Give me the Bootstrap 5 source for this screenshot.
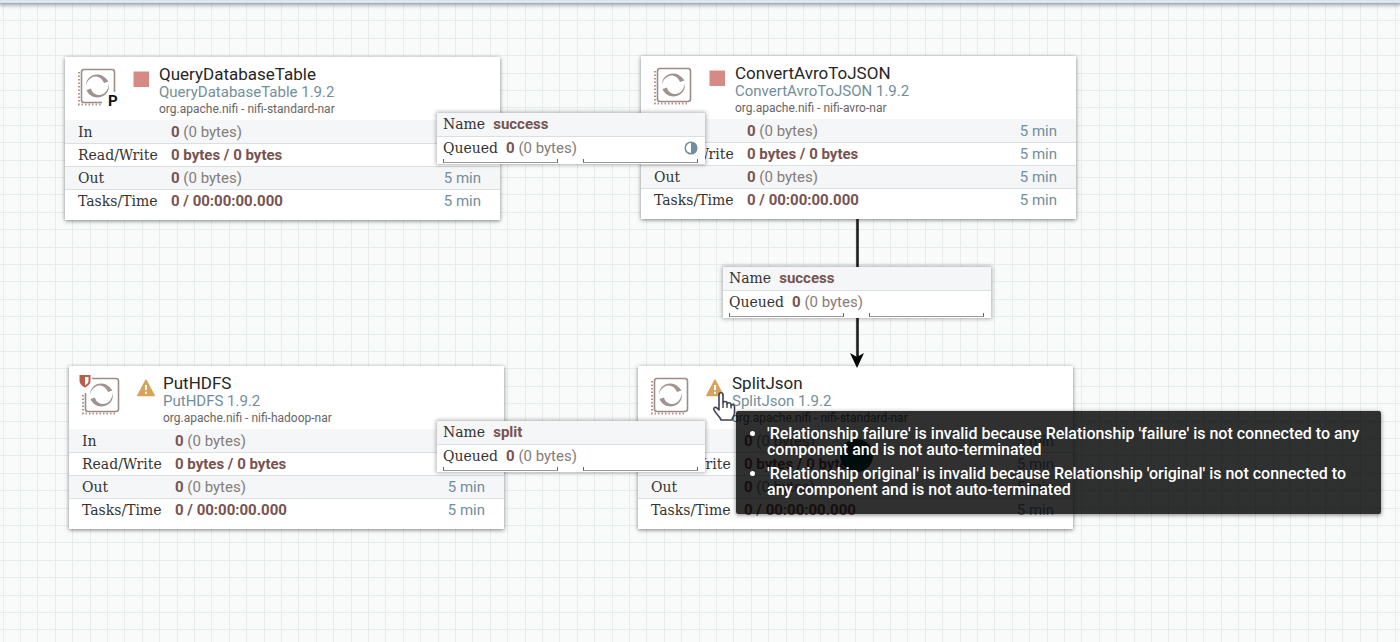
<!DOCTYPE html>
<html lang="en">
<head>
<meta charset="utf-8">
<meta name="viewport" content="width=device-width, initial-scale=1">
<title>NiFi Flow</title>
<link href="https://cdn.jsdelivr.net/npm/bootstrap@5.3.0/dist/css/bootstrap.min.css" rel="stylesheet">
<style>
  body { font-family: Roboto, "Liberation Sans", sans-serif; color: #775351; }
  .flow-canvas {
    --grid: #e5edef;
    background-color: #f9fbfb;
    background-image:
      repeating-linear-gradient(90deg, transparent 0 3px, var(--grid) 3px 4px, transparent 4px 20px, var(--grid) 20px 21px, transparent 21px 37px, var(--grid) 37px 38px, transparent 38px 55px, var(--grid) 55px 56px, transparent 56px 72px, var(--grid) 72px 73px, transparent 73px 87px),
      repeating-linear-gradient(180deg, transparent 0 3px, var(--grid) 3px 4px, transparent 4px 20px, var(--grid) 20px 21px, transparent 21px 38px, var(--grid) 38px 39px, transparent 39px 55px, var(--grid) 55px 56px, transparent 56px 73px, var(--grid) 73px 74px, transparent 74px 87px);
  }
  .top-edge { height: 3px; background: #dce6ef; box-shadow: 0 1px 4px 1px rgba(60,70,90,.55); }
  .processor { width: 435px; background: #fff; box-shadow: 0 1px 4px rgba(0,0,0,.5); padding-bottom: 7px; }
  .processor header { height: 63px; padding: 8px 13px 0; }
  .proc-icon { width: 38px; height: 40px; margin-top: 3px; overflow: visible; }
  .run-icon { width: 18px; height: 18px; margin: 5px 8px 0 17px; }
  .proc-name { font-size: 17px; line-height: 18px; color: #262626; font-weight: 400; }
  .proc-type { font-size: 15px; line-height: 18px; color: #728e9b; }
  .proc-bundle { font-size: 12px; line-height: 16px; color: #666; }
  .stat-rows { font-size: 15px; line-height: 22px; }
  .stat-rows tr { height: 23px; border-top: 1px solid #dcdfe2; }
  .stat-rows tr:first-child { border-top-color: #f4f6f7; }
  .stat-rows tr:nth-child(odd) { background: #f4f6f7; }
  .stat-rows th, .stat-rows td { padding: 0; }
  .stat-rows th { width: 106px; padding-left: 13px; }
  .stat-rows td:last-child { padding-right: 19px; text-align: right; color: #728e9b; }
  .slab { font-family: "Roboto Slab", "DejaVu Serif", serif; font-size: 14px; font-weight: 400; color: #333; }
  .amount { color: #867c79; }
  .connection { width: 268px; height: 51px; background: #fff; box-shadow: 0 0 4px 1px rgba(0,0,0,.3); font-size: 15px; line-height: 23px; z-index: 2; }
  .connection .line-name { background: #f4f6f7; border-bottom: 1px solid #dcdfe2; }
  .connection .line-name, .connection .line-queue { height: 24px; padding: 0 7px 0 6px; }
  .pressure { padding: 0 7px 0 6px; gap: 25px; margin-top: -2px; }
  .pressure i { height: 4px; border: 2px solid #666; border-width: 0 1px 1px; border-bottom-color: #999; }
  .line-arrow { z-index: 1; }
  .invalid-tip { width: 645px; padding: 15px 10px 8px 0; border-radius: 2px; background: rgba(0,0,0,.81); box-shadow: 0 1px 4px rgba(0,0,0,.5); color: #fff; font-size: 16px; font-weight: 500; line-height: 16px; z-index: 4; }
  .invalid-tip ul { padding-left: 31px; }
  .invalid-tip li { margin-bottom: 8px; }
  .link-handle { left: 202px; top: 73px; width: 33px; height: 33px; background: #004849; }
  .pointer-hand { z-index: 5; }
</style>
</head>
<body>
<svg class="d-none" aria-hidden="true">
  <symbol id="proc-box" viewBox="0 0 38 40">
    <rect x="3.5" y="1.5" width="33" height="33" rx="2.5" fill="#fff" stroke="#9c8d8a" stroke-width="1.6"/>
    <path d="M1 4V36.500H34" fill="none" stroke="#b98f88" stroke-width="2" stroke-dasharray="1.500 2"/>
  </symbol>
  <symbol id="proc-arcs" viewBox="0 0 38 40">
    <g fill="#a0938f">
      <path d="M8 18C8 10 14 6 20 6.500C25 7 28 10 30.500 13.500L26 15C24 10 20 8 16.500 8.500C12 9.500 9 13 8 18Z"/>
      <path d="M31 16C31.500 24 27 29 20 29.500C14 29.500 10 26 8.500 22L13 20.500C14 25 18 27.500 22 27C27 26 30 22 31 16Z"/>
    </g>
  </symbol>
  <symbol id="warn" viewBox="0 0 18 18">
    <path d="M9 1.200 17.200 16.500H.8Z" fill="#d9a25b" stroke="#d9a25b" stroke-width="1.500" stroke-linejoin="round"/>
    <path d="M9 6v5M9 12.800v2" stroke="#fff" stroke-width="2"/>
  </symbol>
  <symbol id="stopped" viewBox="0 0 18 18"><path d="M.500 1.500h15.500v15.500h-15.500z" fill="#d68a85"/></symbol>
</svg>

<main class="flow-canvas position-relative min-vh-100 overflow-hidden">
  <div class="top-edge"></div>

  <section class="processor position-absolute" style="left:65px;top:57px">
    <header class="d-flex align-items-start">
      <svg class="proc-icon flex-shrink-0" viewBox="0 0 38 40"><use href="#proc-box"/><use href="#proc-arcs"/><path d="M31 24h8v15H24V32Z" fill="#fff"/><text x="30" y="38" font-size="15" font-weight="700" fill="#111">P</text></svg>
      <svg class="run-icon flex-shrink-0"><use href="#stopped"/></svg>
      <div><h2 class="proc-name m-0">QueryDatabaseTable</h2><div class="proc-type">QueryDatabaseTable 1.9.2</div><div class="proc-bundle">org.apache.nifi - nifi-standard-nar</div></div>
    </header>
    <table class="stat-rows w-100">
      <tr><th class="slab">In</th><td><b>0</b> <span class="amount">(0 bytes)</span></td><td>5 min</td></tr>
      <tr><th class="slab">Read/Write</th><td><b>0 bytes / 0 bytes</b></td><td>5 min</td></tr>
      <tr><th class="slab">Out</th><td><b>0</b> <span class="amount">(0 bytes)</span></td><td>5 min</td></tr>
      <tr><th class="slab">Tasks/Time</th><td><b>0 / 00:00:00.000</b></td><td>5 min</td></tr>
    </table>
  </section>

  <section class="processor position-absolute" style="left:641px;top:56px">
    <header class="d-flex align-items-start">
      <svg class="proc-icon flex-shrink-0"><use href="#proc-box"/><use href="#proc-arcs"/></svg>
      <svg class="run-icon flex-shrink-0"><use href="#stopped"/></svg>
      <div><h2 class="proc-name m-0">ConvertAvroToJSON</h2><div class="proc-type">ConvertAvroToJSON 1.9.2</div><div class="proc-bundle">org.apache.nifi - nifi-avro-nar</div></div>
    </header>
    <table class="stat-rows w-100">
      <tr><th class="slab">In</th><td><b>0</b> <span class="amount">(0 bytes)</span></td><td>5 min</td></tr>
      <tr><th class="slab">Read/Write</th><td><b>0 bytes / 0 bytes</b></td><td>5 min</td></tr>
      <tr><th class="slab">Out</th><td><b>0</b> <span class="amount">(0 bytes)</span></td><td>5 min</td></tr>
      <tr><th class="slab">Tasks/Time</th><td><b>0 / 00:00:00.000</b></td><td>5 min</td></tr>
    </table>
  </section>

  <section class="processor position-absolute" style="left:69px;top:366px">
    <header class="d-flex align-items-start">
      <svg class="proc-icon flex-shrink-0" viewBox="0 0 38 40"><use href="#proc-box"/><use href="#proc-arcs"/><path d="M0 0h10v11l-4 5H0z" fill="#fff"/></svg>
      <svg class="run-icon flex-shrink-0"><use href="#warn"/></svg>
      <div><h2 class="proc-name m-0">PutHDFS</h2><div class="proc-type">PutHDFS 1.9.2</div><div class="proc-bundle">org.apache.nifi - nifi-hadoop-nar</div></div>
      <svg class="position-absolute" style="left:10px;top:8px" width="12" height="14" viewBox="0 0 12 14"><path d="M.500 1h11v6c0 3-2.500 5-5.500 6.500C3 12 .500 10 .500 7Z" fill="#bd5c4c"/><path d="M6 3h3.500v4c0 2-1.500 3.200-3.500 4.300Z" fill="#fff"/></svg>
    </header>
    <table class="stat-rows w-100">
      <tr><th class="slab">In</th><td><b>0</b> <span class="amount">(0 bytes)</span></td><td>5 min</td></tr>
      <tr><th class="slab">Read/Write</th><td><b>0 bytes / 0 bytes</b></td><td>5 min</td></tr>
      <tr><th class="slab">Out</th><td><b>0</b> <span class="amount">(0 bytes)</span></td><td>5 min</td></tr>
      <tr><th class="slab">Tasks/Time</th><td><b>0 / 00:00:00.000</b></td><td>5 min</td></tr>
    </table>
  </section>

  <section class="processor position-absolute" style="left:638px;top:366px">
    <header class="d-flex align-items-start">
      <svg class="proc-icon flex-shrink-0"><use href="#proc-box"/><use href="#proc-arcs"/></svg>
      <svg class="run-icon flex-shrink-0"><use href="#warn"/></svg>
      <div><h2 class="proc-name m-0">SplitJson</h2><div class="proc-type">SplitJson 1.9.2</div><div class="proc-bundle">org.apache.nifi - nifi-standard-nar</div></div>
    </header>
    <table class="stat-rows w-100">
      <tr><th class="slab">In</th><td><b>0</b> <span class="amount">(0 bytes)</span></td><td>5 min</td></tr>
      <tr><th class="slab">Read/Write</th><td><b>0 bytes / 0 bytes</b></td><td>5 min</td></tr>
      <tr><th class="slab">Out</th><td><b>0</b> <span class="amount">(0 bytes)</span></td><td>5 min</td></tr>
      <tr><th class="slab">Tasks/Time</th><td><b>0 / 00:00:00.000</b></td><td>5 min</td></tr>
    </table>
    <span class="link-handle position-absolute rounded-circle"></span>
  </section>

  <svg class="line-arrow position-absolute" style="left:849px;top:219px" width="16" height="150" viewBox="0 0 16 150">
    <path d="M8.500 0V140" stroke="#1c1c1c" stroke-width="2.600"/><path d="M1 134 8 138 15 134 8 149Z" fill="#000"/>
  </svg>

  <div class="connection position-absolute" style="left:437px;top:113px">
    <div class="line-name d-flex gap-2"><span class="slab">Name</span><b>success</b></div>
    <div class="line-queue d-flex gap-2"><span class="slab">Queued</span><span><b>0</b> <span class="amount">(0 bytes)</span></span>
      <svg class="ms-auto mt-1" width="14" height="14" viewBox="0 0 14 14"><circle cx="7" cy="7" r="5.800" fill="#fff" stroke="#728e9b" stroke-width="1.500"/><path d="M7 1a6 6 0 0 1 0 12Z" fill="#728e9b"/></svg></div>
    <div class="pressure d-flex"><i class="flex-fill"></i><i class="flex-fill"></i></div>
  </div>
  <div class="connection position-absolute" style="left:723px;top:267px">
    <div class="line-name d-flex gap-2"><span class="slab">Name</span><b>success</b></div>
    <div class="line-queue d-flex gap-2"><span class="slab">Queued</span><span><b>0</b> <span class="amount">(0 bytes)</span></span></div>
    <div class="pressure d-flex"><i class="flex-fill"></i><i class="flex-fill"></i></div>
  </div>
  <div class="connection position-absolute" style="left:437px;top:421px">
    <div class="line-name d-flex gap-2"><span class="slab">Name</span><b>split</b></div>
    <div class="line-queue d-flex gap-2"><span class="slab">Queued</span><span><b>0</b> <span class="amount">(0 bytes)</span></span></div>
    <div class="pressure d-flex"><i class="flex-fill"></i><i class="flex-fill"></i></div>
  </div>

  <div class="invalid-tip position-absolute" role="tooltip" style="left:736px;top:411px">
    <ul class="m-0">
      <li>'Relationship failure' is invalid because Relationship 'failure' is not connected to any component and is not auto-terminated</li>
      <li>'Relationship original' is invalid because Relationship 'original' is not connected to any component and is not auto-terminated</li>
    </ul>
  </div>

  <svg class="pointer-hand position-absolute" style="left:711px;top:391px" width="26" height="32" viewBox="0 0 26 32">
    <path d="M8 4c0-3 4-3 4 0v8c0-2 4-2 4 0v1c0-2 4-1.500 4 .500v1c1-1.500 3.500-1 3.500 1V22c0 3-2 4-2.500 7H10c-.500-3-5-6-7-10-1-2 1-3.500 3-2l2 2Z" fill="#fff" stroke="#3f4250" stroke-width="1.600" stroke-linejoin="round"/>
    <path d="M12 12v5M16 13v4M20 14.500v3" stroke="#3f4250" stroke-width="1.400"/>
  </svg>
</main>
<script src="https://cdn.jsdelivr.net/npm/bootstrap@5.3.0/dist/js/bootstrap.bundle.min.js"></script>
</body>
</html>
